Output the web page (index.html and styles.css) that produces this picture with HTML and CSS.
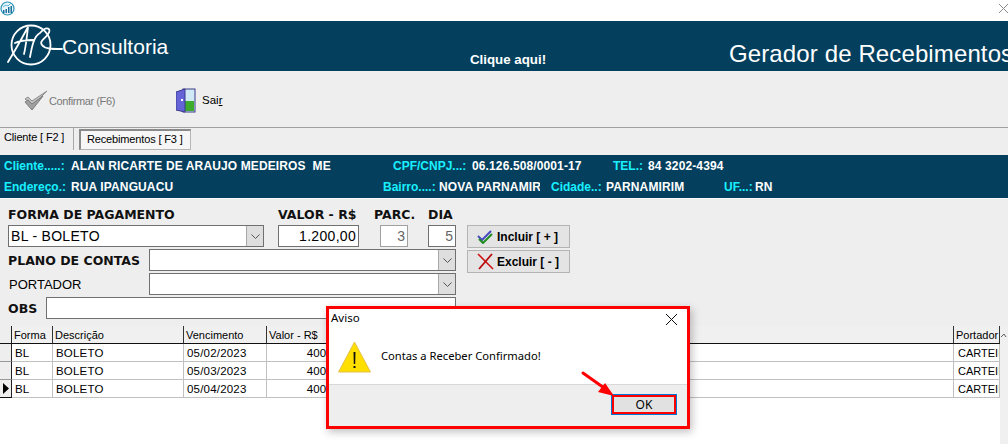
FILE: index.html
```html
<!DOCTYPE html>
<html lang="pt">
<head>
<meta charset="utf-8">
<title>Gerador de Recebimentos</title>
<link rel="stylesheet" href="styles.css">
</head>
<body>
<div class="window">
  <div class="titlebar">
    <svg class="app-icon" width="15" height="15" viewBox="0 0 15 15"><circle cx="7.5" cy="7.5" r="6.5" fill="#eaf6fb" stroke="#2b93b8" stroke-width="1.2"/><path d="M3 12V9h1.5v3zM5.5 12V8H7v4zM8 12V6h1.5v6zM10.5 12V5H12v7z" fill="#1c6f9c"/><path d="M3 6l3-2 2 1 3-3" fill="none" stroke="#5fb7d3"/></svg>
    <svg class="close-x" width="11" height="11" viewBox="0 0 11 11"><path d="M1 1l9 9M10 1l-9 9" stroke="#8a8a8a" fill="none"/></svg>
  </div>
  <header class="banner">
    <div class="brand">
      <svg class="logo" width="56" height="46" viewBox="0 0 56 46"><circle cx="24" cy="21" r="19.5" fill="none" stroke="#fff" stroke-width="1.8"/><path d="M1 38C6 30 15 14 21 3 20 12 19 22 17 30M8 19c6-3 12-3 18-3M23 33c2-11 4-21 10-24 7-8 12-4 8 1-3 5-9 7-6 11 3 4 9 4 20 4" fill="none" stroke="#fff" stroke-width="1.8" stroke-linecap="round"/></svg>
      <span class="brand-name">Consultoria</span>
    </div>
    <span class="click-here">Clique aqui!</span>
    <h1 class="app-title">Gerador de Recebimentos</h1>
  </header>
  <div class="toolbar">
    <button class="tool tool-confirm">
      <svg width="24" height="21" viewBox="0 0 24 21"><path d="M1 9l3-2 4 4L23 1 9 15z" fill="#c4c4c4" stroke="#8a8a8a"/><path d="M1 12l3-2 4 4L19 6 8 20z" fill="#a0a0a0" stroke="#7d7d7d"/></svg>
      <span>Confirmar (F6)</span>
    </button>
    <button class="tool tool-exit">
      <svg width="20" height="25" viewBox="0 0 20 25"><rect x="7" y="1" width="12" height="23" fill="#cfeaf5" stroke="#3a3a8c"/><rect x="8" y="13" width="10" height="10" fill="#3dab2b"/><path d="M0 4l9-3v23L0 22z" fill="#6464d8" stroke="#3a3a8c"/><rect x="5" y="11" width="2" height="2" fill="#fff"/></svg>
      <span class="exit-label">Sai<u>r</u></span>
    </button>
  </div>
  <nav class="tabs">
    <span class="tab">Cliente [ F2 ]</span>
    <span class="tab tab-active">Recebimentos [ F3 ]</span>
  </nav>
  <section class="client">
    <div class="client-row">
      <span class="f f-a"><b class="k-a">Cliente.....:</b>ALAN RICARTE DE ARAUJO MEDEIROS&nbsp; ME</span>
      <span class="f f-b"><b class="k-b">CPF/CNPJ...:</b>06.126.508/0001-17</span>
      <span class="f f-c"><b class="k-c">TEL.:</b>84 3202-4394</span>
    </div>
    <div class="client-row">
      <span class="f f-d"><b class="k-a">Endereço.:</b>RUA IPANGUACU</span>
      <span class="f f-e"><b class="k-e">Bairro....:</b><i class="clip">NOVA PARNAMIRIM</i></span>
      <span class="f f-f"><b class="k-f">Cidade..:</b>PARNAMIRIM</span>
      <span class="f f-g"><b class="k-g">UF...:</b>RN</span>
    </div>
  </section>
  <section class="form">
    <div class="fields">
      <div class="row-labels">
        <label class="lbl l-forma">FORMA DE PAGAMENTO</label>
        <label class="lbl l-valor">VALOR - R$</label>
        <label class="lbl l-parc">PARC.</label>
        <label class="lbl l-dia">DIA</label>
      </div>
      <div class="row-inputs">
        <div class="combo c-forma"><span>BL - BOLETO</span><i class="drop"><svg width="9" height="5" viewBox="0 0 9 5"><path d="M.5.5l4 4 4-4" fill="none" stroke="#555"/></svg></i></div>
        <div class="input i-valor">1.200,00</div>
        <div class="input i-parc">3</div>
        <div class="input i-dia">5</div>
      </div>
      <div class="row-field">
        <label class="lbl l-side">PLANO DE CONTAS</label>
        <div class="combo c-side"><span></span><i class="drop"><svg width="9" height="5" viewBox="0 0 9 5"><path d="M.5.5l4 4 4-4" fill="none" stroke="#555"/></svg></i></div>
      </div>
      <div class="row-field">
        <label class="lbl-plain l-side">PORTADOR</label>
        <div class="combo c-side"><span></span><i class="drop"><svg width="9" height="5" viewBox="0 0 9 5"><path d="M.5.5l4 4 4-4" fill="none" stroke="#555"/></svg></i></div>
      </div>
      <div class="row-field">
        <label class="lbl l-obs">OBS</label>
        <div class="input i-obs"></div>
      </div>
    </div>
    <div class="actions">
      <button class="action">
        <svg width="17" height="14" viewBox="0 0 17 14"><path d="M1 6l4 4 9-9" fill="none" stroke="#4a4ac0" stroke-width="2"/><path d="M2 9l4 4 9-9" fill="none" stroke="#1f8f1f" stroke-width="2"/></svg>
        <span>Incluir [ + ]</span>
      </button>
      <button class="action">
        <svg width="17" height="17" viewBox="0 0 17 17"><path d="M1 1l15 15" fill="none" stroke="#d01010" stroke-width="1.6"/><path d="M15 1L2 16" fill="none" stroke="#b80c0c" stroke-width="1.8"/></svg>
        <span>Excluir [ - ]</span>
      </button>
    </div>
  </section>
  <section class="grid-wrap">
    <div class="grid">
      <div class="tr th">
        <span class="ind"></span><span class="c1">Forma</span><span class="c2">Descrição</span><span class="c3">Vencimento</span><span class="c4">Valor - R$</span><span class="c5"></span><span class="c6">Portador</span>
      </div>
      <div class="tr">
        <span class="ind"></span><span class="c1">BL</span><span class="c2">BOLETO</span><span class="c3">05/02/2023</span><span class="c4 num">400,00</span><span class="c5"></span><span class="c6">CARTEIRA</span>
      </div>
      <div class="tr">
        <span class="ind"></span><span class="c1">BL</span><span class="c2">BOLETO</span><span class="c3">05/03/2023</span><span class="c4 num">400,00</span><span class="c5"></span><span class="c6">CARTEIRA</span>
      </div>
      <div class="tr">
        <span class="ind ind-cur"><svg width="6" height="11" viewBox="0 0 6 11"><path d="M0 0l6 5.500L0 11z" fill="#000"/></svg></span><span class="c1">BL</span><span class="c2">BOLETO</span><span class="c3">05/04/2023</span><span class="c4 num">400,00</span><span class="c5"></span><span class="c6">CARTEIRA</span>
      </div>
    </div>
    <div class="vscroll"><svg width="7" height="5" viewBox="0 0 7 5"><path d="M1 4l3-3 2 3" fill="none" stroke="#606060"/></svg></div>
  </section>
</div>

<div class="dialog">
  <div class="dlg-title">
    <span>Aviso</span>
    <svg width="13" height="13" viewBox="0 0 13 13"><path d="M1 1l11 11M12 1L1 12" stroke="#111" fill="none"/></svg>
  </div>
  <div class="dlg-body">
    <svg width="33" height="32" viewBox="0 0 33 32"><path d="M16.500 1L32.500 31H.5z" fill="#ffdf00" stroke="#e3c04a"/><path d="M15.500 11h2l-.3 12h-1.400z" fill="#111"/><rect x="15.500" y="25" width="2" height="2" fill="#111"/></svg>
    <p>Contas a Receber Confirmado!</p>
  </div>
  <div class="dlg-foot">
    <button class="ok">OK</button>
  </div>
</div>
<svg class="arrow" width="36" height="30" viewBox="0 0 36 30"><path d="M2 4l24 17" stroke="#f00" stroke-width="3" fill="none" stroke-linecap="round"/><path d="M33 27L17 23l7-9z" fill="#f00"/></svg>
</body>
</html>
```

FILE: styles.css
```css
* { box-sizing: border-box; }
html, body { margin: 0; padding: 0; }
body {
  width: 1008px;
  height: 444px;
  overflow: hidden;
  background: #fff;
  font-family: "Liberation Sans", Arial, sans-serif;
  color: #000;
  position: relative;
}
.window { width: 1008px; height: 444px; display: flex; flex-direction: column; overflow: hidden; }
button { font: inherit; color: inherit; background: none; border: 0; padding: 0; }

.titlebar { height: 21px; background: #fff; display: flex; justify-content: space-between; align-items: flex-start; }
.app-icon { margin-top: 1px; flex: none; }
.close-x { margin: 3px -1px 0 0; }

.banner { height: 50px; background: #043f5e; color: #fff; display: flex; flex: none; overflow: hidden; white-space: nowrap; }
.brand { width: 470px; flex: none; display: flex; align-items: flex-start; }
.logo { margin: 3px 0 0 7px; flex: none; }
.brand-name { font-size: 21px; margin: 14px 0 0 -1px; }
.click-here { width: 259px; flex: none; font-size: 13.300px; font-weight: bold; padding-top: 31px; }
.app-title { flex: none; margin: 19px 0 0; font-size: 24px; font-weight: normal; line-height: 28px; letter-spacing: .12px; }

.toolbar { height: 57px; background: #eee; border-bottom: 1px solid #a0a0a0; display: flex; align-items: flex-start; flex: none; }
.tool { display: flex; align-items: center; font-size: 11.500px; }
.tool-confirm { width: 152px; margin: 19px 0 0 24px; gap: 1px; color: #787878; font-size: 11px; letter-spacing: -.4px; }
.tool-exit { margin: 17px 0 0 0; gap: 6px; }
.exit-label { margin-top: -2px; }

.tabs { height: 27px; background: #eee; display: flex; align-items: flex-start; font-size: 11px; letter-spacing: -.15px; flex: none; }
.tab { height: 22px; padding: 3px 0 0 4px; width: 74px; border-right: 1px solid #a8a8a8; white-space: nowrap; }
.tab-active { width: 112px; margin: 1px 0 0 5px; padding: 2px 0 0 6px; height: 21px; background: #f6f6f6; border: 1px solid #b5b5b5; border-top: 2px solid #8a8a8a; border-left: 2px solid #8a8a8a; }

.client { height: 43px; background: #043f5e; color: #fff; font-size: 12px; font-weight: bold; flex: none; letter-spacing: .12px; white-space: nowrap; }
.client-row { height: 21px; display: flex; padding-top: 4px; }
.client-row b { color: #19f0ff; font-weight: bold; display: inline-block; letter-spacing: 0; }
.f { display: block; }
.k-a { width: 67px; }
.k-b { width: 79px; }
.k-c { width: 35px; }
.k-e { width: 56px; }
.k-f { width: 55px; }
.k-g { width: 31px; }
.f-a { width: 393px; padding-left: 4px; }
.f-b { width: 220px; }
.f-d { width: 383px; padding-left: 4px; }
.f-e { width: 168px; }
.f-f { width: 173px; }
.clip { display: inline-block; width: 101px; overflow: hidden; vertical-align: bottom; font-style: normal; }

.form { height: 128px; background: #eee; display: flex; flex: none; border-top: 1px solid #f8f8f8; }
.fields { width: 467px; padding: 8px 0 0 8px; }
.lbl { font-family: "DejaVu Sans", sans-serif; font-weight: bold; font-size: 12.500px; color: #111; white-space: nowrap; }
.lbl-plain { font-size: 13px; padding-left: 1px; }
.row-labels { display: flex; height: 18px; line-height: 15px; }
.l-forma { width: 270px; }
.l-valor { width: 96px; }
.l-parc { width: 54px; }
.row-inputs { display: flex; height: 23px; }
.combo { background: #fff; border: 1px solid #707070; display: flex; justify-content: space-between; font-size: 14px; }
.combo span { padding: 2px 0 0 2px; letter-spacing: .3px; }
.drop { width: 17px; background: #dedede; border-left: 1px solid #a8a8a8; display: flex; align-items: center; justify-content: center; }
.c-forma { width: 256px; height: 22px; }
.c-side { width: 307px; height: 22px; }
.input { background: #fff; border: 1px solid #707070; font-size: 14px; text-align: right; height: 22px; padding: 2px 2px 0 0; }
.i-valor { width: 81px; margin-left: 14px; letter-spacing: .3px; }
.i-parc { width: 28px; margin-left: 21px; color: #666; border-color: #a0a0a0; font-size: 14px; }
.i-dia { width: 28px; margin-left: 20px; color: #666; font-size: 14px; }
.row-field { display: flex; align-items: center; height: 24px; }
.l-side { width: 141px; }
.l-obs { width: 38px; }
.i-obs { width: 410px; }

.actions { display: flex; flex-direction: column; gap: 2px; padding-top: 26px; }
.action { width: 103px; height: 23px; background: #e4e4e4; border: 1px solid #b4b4b4; display: flex; align-items: center; justify-content: flex-start; gap: 3px; padding-left: 9px; font-size: 12px; font-weight: bold; }

.grid-wrap { flex: 1; display: flex; background: #fff; min-height: 0; }
.grid { width: 1000px; }
.vscroll { width: 8px; background: #f0f0f0; padding-top: 7px; }
.vscroll svg { display: block; }
.tr { display: grid; grid-template-columns: 12px 41px 131px 83px 77px 610px 46px; height: 18px; font-size: 11.500px; line-height: 19px; white-space: nowrap; }
.tr span { border-right: 1px solid #c0c0c0; border-bottom: 1px solid #c0c0c0; padding-left: 3px; overflow: hidden; letter-spacing: .2px; }
.th span { background: #f0f0f0; border-right: 1px solid #333; border-bottom: 1px solid #111; padding-left: 2px; letter-spacing: 0; font-size: 11px; }
.tr .ind { background: #eee; border-right: 1px solid #222; border-bottom: 1px solid #999; padding: 0; }
.th .ind { border-bottom-color: #111; }
.tr .ind-cur { display: flex; align-items: center; padding-left: 3px; border-bottom-color: #111; }
.num { text-align: right; }
.tr .c6 { letter-spacing: 0; font-size: 11px; padding-left: 4px; }
.th .c6 { padding-left: 2px; }
.th { height: 18px; }

.dialog { position: absolute; left: 326px; top: 306px; width: 364px; height: 123px; background: #fff; border: 3px solid #f00; box-shadow: 2px 3px 8px rgba(0,0,0,.25); display: flex; flex-direction: column; }
.dlg-title { height: 23px; display: flex; justify-content: space-between; align-items: flex-start; padding: 0 9px 0 2px; font-size: 11.500px; line-height: 18px; font-family: "Noto Sans", sans-serif; }
.dlg-title svg { margin-top: 4px; }
.dlg-body { height: 52px; display: flex; align-items: flex-start; gap: 10px; padding: 9px 0 0 9px; }
.dlg-body p { margin: 7px 0 0; font-family: "Noto Sans", sans-serif; font-size: 11.200px; }
.dlg-foot { flex: 1; background: #eee; border-top: 1px solid #d8d8d8; display: flex; justify-content: flex-end; align-items: flex-start; padding: 9px 10px 0 0; }
.ok { width: 66px; height: 21px; background: #e1e1e1; border: 3px solid #f00; outline: 1px solid #0078d7; outline-offset: -1px; font-family: "Noto Sans", sans-serif; font-size: 12px; line-height: 14px; }
.arrow { position: absolute; left: 581px; top: 369px; }
```
